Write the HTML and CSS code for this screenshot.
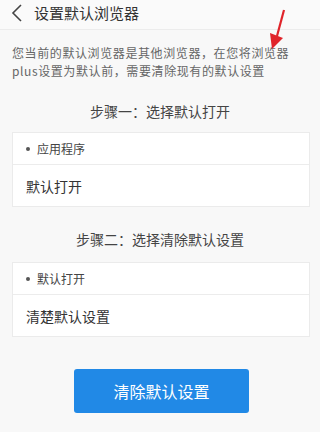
FILE: index.html
```html
<!DOCTYPE html>
<html lang="zh">
<head>
    <meta charset="UTF-8">
    <meta name="viewport" content="width=device-width, initial-scale=1.0">
    <title>设置默认浏览器</title>
    <link rel="stylesheet" href="styles.css">
</head>
<body>

    <div class="header">
        <svg class="back" width="12" height="18" viewBox="0 0 12 18">
            <path d="M10 1 L2 9 L10 17" fill="none" stroke="#444" stroke-width="1.6"/>
        </svg>
        <div class="header-title">设置默认浏览器</div>
    </div>

    <!-- 红色箭头标注 -->
    <svg class="arrow" width="30" height="44" viewBox="0 0 30 44">
        <path d="M23 1 L16 27" stroke="#e0242a" stroke-width="2.2" fill="none"/>
        <polygon points="9,24 22,29 11,40" fill="#e0242a"/>
    </svg>

    <div class="desc">您当前的默认浏览器是其他浏览器，在您将浏览器<br>plus设置为默认前，需要清除现有的默认设置</div>

    <div class="step-title">步骤一：选择默认打开</div>
    <div class="card">
        <div class="card-label"><span class="dot"></span>应用程序</div>
        <div class="card-value">默认打开</div>
    </div>

    <div class="step-title second">步骤二：选择清除默认设置</div>
    <div class="card second">
        <div class="card-label"><span class="dot"></span>默认打开</div>
        <div class="card-value">清楚默认设置</div>
    </div>

    <div class="btn-wrap">
        <button class="btn">清除默认设置</button>
    </div>

</body>
</html>
```

FILE: styles.css
```css
body {
    margin: 0;
    background: #f8f8f8;
    color: #333;
    font-family: "Noto Sans CJK SC", "Noto Sans", sans-serif;
    position: relative;
    width: 320px;
    height: 432px;
    overflow: hidden;
}

.header {
    height: 29px;
    display: flex;
    align-items: center;
    padding-left: 11px;
    border-bottom: 1px solid #ececec;
    background: #fafafa;
}

.back {
    margin-right: 11px;
    margin-top: -4px;
}

.header-title {
    font-size: 15px;
    color: #333;
    margin-top: -4px;
}

.arrow {
    position: absolute;
    left: 261px;
    top: 9px;
}

.desc {
    font-size: 12px;
    letter-spacing: 0.6px;
    line-height: 18px;
    color: #666;
    padding: 14px 0 0 12px;
    white-space: nowrap;
}

.step-title {
    text-align: center;
    font-size: 14px;
    color: #444;
    margin-top: 21px;
    height: 20px;
    line-height: 20px;
}

.step-title.second {
    margin-top: 22px;
}

.card {
    margin: 11px 10px 0 12px;
    background: #fff;
    border: 1px solid #ebebeb;
}

.card.second {
    margin-top: 13px;
}

.card-label {
    height: 31px;
    display: flex;
    align-items: center;
    font-size: 12px;
    color: #444;
    padding-left: 13px;
    border-bottom: 1px solid #ececec;
}

.dot {
    width: 4px;
    height: 4px;
    border-radius: 50%;
    background: #555;
    margin-right: 7px;
}

.card-value {
    height: 41px;
    display: flex;
    align-items: center;
    font-size: 14px;
    color: #333;
    padding-left: 13px;
}

.btn-wrap {
    display: flex;
    justify-content: center;
    margin-top: 32px;
}

.btn {
    width: 175px;
    height: 44px;
    margin-left: 3px;
    background: #2189e6;
    border: none;
    border-radius: 3px;
    color: #fff;
    font-size: 16px;
    font-family: "Noto Sans CJK SC", sans-serif;
}
```
